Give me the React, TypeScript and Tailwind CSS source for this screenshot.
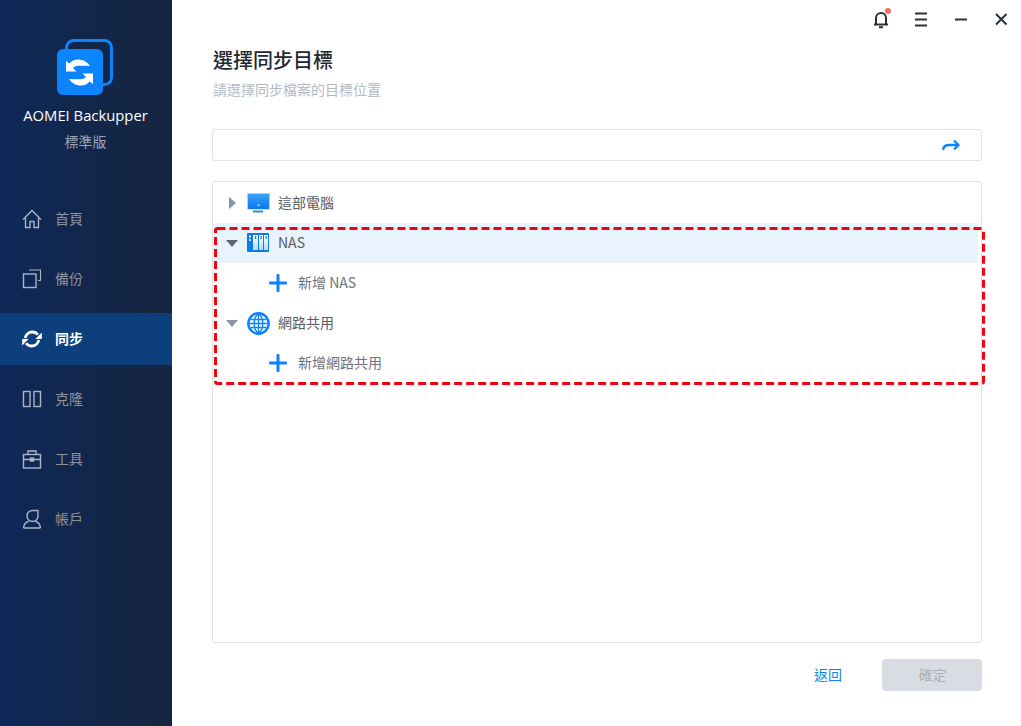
import type { ReactNode } from 'react'

const font = "font-['Noto_Sans_CJK_TC','Noto_Sans_CJK_SC',sans-serif]"

function HomeIcon() {
  return (
    <svg width="20" height="20" viewBox="0 0 20 20" fill="none" stroke="currentColor" strokeWidth="1.4">
      <path d="M1 10.500 10 1.500l9 9M3.500 9v9.500h4.500v-6h4v6h4.500V9" />
    </svg>
  )
}

function BackupIcon() {
  return (
    <svg width="20" height="20" viewBox="0 0 20 20" fill="none" stroke="currentColor" strokeWidth="1.4">
      <rect x="1.500" y="5" width="12.500" height="13.500" />
      <path d="M7 1h11.500v10.500H16" strokeWidth="1.100" />
    </svg>
  )
}

function SyncIcon() {
  return (
    <svg width="20" height="18" viewBox="0 0 20 18" fill="none" stroke="currentColor" strokeWidth="2.800">
      <path d="M3.200 8C4 4.500 7 2 10.300 2c2.400 0 4.200 1 5.500 2.800" />
      <path d="M16.800 10c-.800 3.500-3.800 6-7.100 6-2.400 0-4.200-1-5.500-2.800" />
      <path d="M19.800 2.500v6.500h-6.500z" fill="currentColor" stroke="none" />
      <path d="M.200 15.500V9h6.500z" fill="currentColor" stroke="none" />
    </svg>
  )
}

function CloneIcon() {
  return (
    <svg width="20" height="18" viewBox="0 0 20 18" fill="none" stroke="currentColor" strokeWidth="1.4">
      <rect x="1.500" y="1.500" width="6.500" height="15" />
      <rect x="12" y="1.500" width="6.500" height="15" />
    </svg>
  )
}

function ToolsIcon() {
  return (
    <svg width="20" height="19" viewBox="0 0 20 19" fill="none" stroke="currentColor" strokeWidth="1.4">
      <rect x="1.500" y="4.500" width="17" height="13.500" />
      <path d="M6 4.500V1h8v3.500M1.500 9.500h17" />
      <rect x="8.500" y="8" width="3" height="3" fill="currentColor" />
    </svg>
  )
}

function UserIcon() {
  return (
    <svg width="20" height="20" viewBox="0 0 20 20" fill="none" stroke="currentColor" strokeWidth="1.4">
      <path d="M10.500 1.500h5.500v5.500a5.500 5.500 0 1 1-5.500-5.500z" />
      <path d="M1.500 19c.500-4 2.500-6 5-6.500M18.500 19c-.500-4-2.500-6-5-6.500M1.500 19h17" />
    </svg>
  )
}

const navItems: { label: string; icon: ReactNode; active?: boolean }[] = [
  { label: '首頁', icon: <HomeIcon /> },
  { label: '備份', icon: <BackupIcon /> },
  { label: '同步', icon: <SyncIcon />, active: true },
  { label: '克隆', icon: <CloneIcon /> },
  { label: '工具', icon: <ToolsIcon /> },
  { label: '帳戶', icon: <UserIcon /> },
]

function Logo() {
  const swoosh =
    'M33 27C30 22.500 25.500 20.500 21 20.500c-3.500 0-6.500 1.500-8.500 4L9 22v10.500h10.500L16 29c1.500-1.500 3.200-2.200 5.500-2.200 4 0 8 0 11.500.2z'
  return (
    <svg width="57" height="57" viewBox="0 0 57 57" fill="none">
      <rect x="9.500" y="1.500" width="45" height="44" rx="7" stroke="#0b84fe" strokeWidth="3" />
      <rect x="0" y="10" width="46" height="46" rx="6" fill="#0b84fe" />
      <path d={swoosh} fill="#fff" />
      <path d={swoosh} fill="#fff" transform="rotate(180 22.500 33.500)" />
    </svg>
  )
}

function Monitor() {
  return (
    <svg width="24" height="20" viewBox="0 0 24 20">
      <defs>
        <linearGradient id="screen" x1="0" y1="0" x2="0" y2="1">
          <stop offset="0" stopColor="#3aa0f9" />
          <stop offset="1" stopColor="#0d76ea" />
        </linearGradient>
      </defs>
      <rect x="0" y="0" width="23" height="16.500" fill="#a9d4f8" />
      <rect x="1" y="1" width="21" height="15" fill="url(#screen)" />
      <rect x="10.500" y="11.500" width="2" height="1.500" fill="#cfe6fb" />
      <rect x="6" y="17.500" width="10" height="2" fill="#1f8df0" />
    </svg>
  )
}

function NasIcon() {
  return (
    <svg width="23" height="20" viewBox="0 0 23 20">
      <defs>
        <linearGradient id="nasColumn" x1="0" y1="0" x2="0" y2="1">
          <stop offset="0" stopColor="#ffffff" />
          <stop offset="1" stopColor="#b5d9fa" />
        </linearGradient>
      </defs>
      <rect x="0" y="0" width="22" height="19" rx="1" fill="#0b7bea" />
      <rect x="6" y="2" width="5" height="15" fill="url(#nasColumn)" />
      <rect x="12" y="2" width="4" height="15" fill="url(#nasColumn)" />
      <rect x="17" y="2" width="4" height="15" fill="url(#nasColumn)" />
      <rect x="2" y="2.500" width="2" height="2" fill="#fff" />
      <rect x="2" y="6" width="2" height="2" fill="#cfe6fb" />
      <rect x="8" y="3" width="1.200" height="3" fill="#0b7bea" />
      <rect x="13.500" y="3" width="1.200" height="3" fill="#0b7bea" />
      <rect x="18.500" y="3" width="1.200" height="3" fill="#0b7bea" />
    </svg>
  )
}

function GlobeIcon() {
  return (
    <svg width="23" height="23" viewBox="0 0 23 23" fill="none" stroke="#0b84fe">
      <circle cx="11.500" cy="11.500" r="10.200" strokeWidth="2.400" />
      <ellipse cx="11.500" cy="11.500" rx="4.300" ry="9" strokeWidth="1.300" />
      <path d="M11.500 2v19M2 11.500h19M3.500 7.500h16M3.500 15.500h16" strokeWidth="1.300" />
    </svg>
  )
}

function Plus() {
  return (
    <svg width="18" height="18" viewBox="0 0 18 18" fill="#0b84fe">
      <rect x="7.500" y="0" width="3" height="18" rx="1" />
      <rect x="0" y="7.500" width="18" height="3" rx="1" />
    </svg>
  )
}

function TreeRow({
  caret,
  icon,
  label,
  highlighted,
}: {
  caret: 'right' | 'down'
  icon: ReactNode
  label: string
  highlighted?: boolean
}) {
  return (
    <div className={`flex h-10 items-center ${highlighted ? 'bg-[#e8f3fd]' : ''}`}>
      <div className="flex w-[33px] justify-center pl-[3px]">
        {caret === 'right' ? (
          <div className="ml-[1px] h-0 w-0 border-y-[6px] border-l-[7px] border-y-transparent border-l-[#8a94a2]" />
        ) : (
          <div
            className={`-ml-[1px] h-0 w-0 border-x-[6px] border-t-[7px] border-x-transparent ${
              highlighted ? 'border-t-[#5f6670]' : 'border-t-[#8a94a2]'
            }`}
          />
        )}
      </div>
      <div className="flex w-[31px] justify-start">{icon}</div>
      <span className="pb-[2px] text-[14px] text-[#555c66]">{label}</span>
    </div>
  )
}

function AddRow({ label }: { label: string }) {
  return (
    <div className="flex h-10 items-center pl-[55px]">
      <div className="flex w-[29px] justify-start">
        <Plus />
      </div>
      <span className="pb-[2px] text-[14px] text-[#6d7480]">{label}</span>
    </div>
  )
}

export default function App() {
  return (
    <div className={`relative flex h-[726px] w-[1021px] overflow-hidden bg-white ${font}`}>
      <aside className="flex w-[172px] shrink-0 flex-col bg-gradient-to-r from-[#0e2858] to-[#16253f]">
        <div className="flex justify-center pt-[39px] pr-[1px]">
          <Logo />
        </div>
        <div className="mt-[9px] pr-[1px] text-center font-['Open_Sans',sans-serif] text-[14.800px] leading-5 text-white">
          AOMEI Backupper
        </div>
        <div className="mt-[6px] pr-[1px] text-center text-[14px] leading-5 text-[#9aa5b8]">標準版</div>
        <nav className="mt-[42px] flex flex-col gap-2">
          {navItems.map((item) => (
            <div
              key={item.label}
              className={`flex h-[52px] items-center pl-[22px] ${
                item.active ? 'bg-[#0c3f7c] text-white' : 'text-[#aab4c6]'
              }`}
            >
              <div className="flex w-[33px] items-center">{item.icon}</div>
              <span
                className={`pb-[2px] text-[14px] leading-5 ${item.active ? 'font-bold text-white' : 'text-[#8c93a1]'}`}
              >
                {item.label}
              </span>
            </div>
          ))}
        </nav>
      </aside>

      <main className="flex flex-1 flex-col pr-[39px] pl-[40px]">
        <div className="-mr-[39px] flex h-[37px] items-center justify-end gap-[20px] pr-[10px] text-[#2a303a]">
          <div className="relative">
            <svg width="20" height="20" viewBox="0 0 20 20" fill="none" stroke="currentColor" strokeWidth="2">
              <path d="M3 15.500h14M5 15.500V9a5 5 0 0 1 10 0v6.500" />
              <path d="M8 18.200h4" />
            </svg>
            <div className="absolute -top-[1px] right-[0px] h-[6px] w-[6px] rounded-full bg-[#fb6a6a]" />
          </div>
          <svg width="20" height="20" viewBox="0 0 20 20" fill="none" stroke="currentColor" strokeWidth="2">
            <path d="M4 4.500h12M4 10.500h12M4 16.500h12" />
          </svg>
          <svg width="20" height="20" viewBox="0 0 20 20" fill="none" stroke="currentColor" strokeWidth="2">
            <path d="M4 10.500h12" />
          </svg>
          <svg width="20" height="20" viewBox="0 0 20 20" fill="none" stroke="currentColor" strokeWidth="2">
            <path d="M5 5l10.500 10.500M15.500 5 5 15.500" />
          </svg>
        </div>
        <h1 className="mt-[9px] ml-[1px] text-[20px] leading-7 font-medium text-[#22272f]">選擇同步目標</h1>
        <p className="mt-[5px] ml-[1px] text-[14px] leading-5 text-[#b4bac3]">請選擇同步檔案的目標位置</p>
        <div className="mt-[30px] flex h-8 items-center justify-end rounded-[3px] border border-[#dfe1e4] pr-[21px]">
          <svg width="18" height="12" viewBox="0 0 18 12" fill="none" stroke="#0b84fe" strokeWidth="2.400">
            <path d="M1 11c.500-3.500 3-5 6-5h8" />
            <path d="M12 1.500 16.500 6 12 10.500" strokeWidth="2.200" />
          </svg>
        </div>
        <div className="mt-5 h-[462px] rounded-[3px] border border-[#dfe1e4] pt-[1px] pr-[3px] pl-[1px]">
          <TreeRow caret="right" icon={<Monitor />} label="這部電腦" />
          <TreeRow caret="down" icon={<NasIcon />} label="NAS" highlighted />
          <AddRow label="新增 NAS" />
          <TreeRow caret="down" icon={<GlobeIcon />} label="網路共用" />
          <AddRow label="新增網路共用" />
        </div>
        <div className="mt-4 flex items-center justify-end">
          <span className="mr-10 pb-[2px] text-[14px] text-[#0b84e8]">返回</span>
          <div className="flex h-8 w-[100px] items-center justify-center rounded-[4px] bg-[#d9dde3] pb-[2px] pl-[1px] text-[14px] text-[#abb0b8]">
            確定
          </div>
        </div>
      </main>

      {/* red annotation round the NAS and share rows */}
      <svg
        className="absolute top-[227px] left-[214px]"
        width="771"
        height="158"
        viewBox="0 0 771 158"
        fill="none"
      >
        <rect
          x="1.500"
          y="1.500"
          width="768"
          height="155"
          rx="2"
          stroke="#f5000f"
          strokeWidth="3"
          strokeDasharray="8 4"
        />
      </svg>
    </div>
  )
}
